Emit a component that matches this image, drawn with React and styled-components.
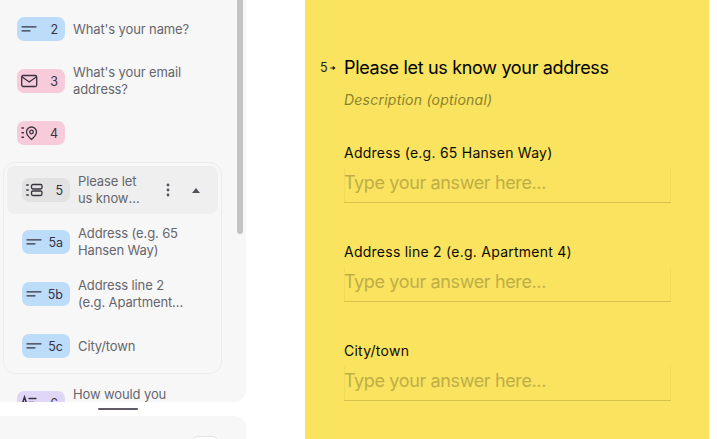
import React from "react";
import styled, { createGlobalStyle } from "styled-components";

const colors = {
  panel: "#f7f7f8",
  line: "#ececee",
  active: "#efefef",
  text: "#66666c",
  ink: "#37333f",
  yellow: "#f9e35f",
  blue: "#bcdcfa",
  pink: "#f8cbdb",
  purple: "#e0d7f8",
  grey: "#e2e2e2"
};

const GlobalStyle = createGlobalStyle`
  html, body {
    margin: 0;
    height: 100%;
    overflow: hidden;
    background: #fff;
    font-family: Inter, "Liberation Sans", sans-serif;
  }
`;

const Page = styled.div`
  width: 717px;
  height: 439px;
  display: grid;
  grid-template-columns: 246px 59px 404px 8px;
  overflow: hidden;
`;

const Side = styled.aside`
  display: flex;
  flex-direction: column;
  height: 439px;
  overflow: hidden;
`;

const ListPanel = styled.div`
  position: relative;
  box-sizing: border-box;
  height: 402px;
  flex: none;
  padding-top: 3px;
  background: ${colors.panel};
  border-radius: 0 0 12px 0;
  overflow: hidden;
`;

const Thumb = styled.div`
  position: absolute;
  top: -6px;
  right: 3px;
  width: 6px;
  height: 240px;
  border-radius: 3px;
  background: #c4c4c4;
`;

const Row = styled.div`
  height: 52px;
  display: flex;
  align-items: center;
  gap: 8px;
  padding-left: ${p => p.$indent || 17}px;
`;

const ActiveRow = styled(Row)`
  height: 48px;
  margin-bottom: 2px;
  padding-left: 15px;
  padding-right: 18px;
  background: ${colors.active};
  border-radius: 8px;
`;

const Chip = styled.div`
  flex: none;
  box-sizing: border-box;
  width: 48px;
  height: 24px;
  padding: 0 7px 0 4px;
  display: flex;
  align-items: center;
  justify-content: space-between;
  border-radius: 7px;
  background: ${p => p.$bg};
  color: ${colors.ink};
  font-size: 12.5px;
`;

const Title = styled.div`
  width: ${p => p.$width || 130}px;
  font-size: 13px;
  line-height: 17px;
  letter-spacing: -0.12px;
  color: ${colors.text};
  display: -webkit-box;
  -webkit-line-clamp: 2;
  -webkit-box-orient: vertical;
  overflow: hidden;
`;

const Group = styled.div`
  margin: 3px 0 3px 3px;
  width: 219px;
  box-sizing: border-box;
  padding: 3px 3px 1px;
  border: 1px solid ${colors.line};
  border-radius: 12px;
`;

const RowActions = styled.div`
  margin-left: auto;
  display: flex;
  align-items: center;
  gap: 22px;
`;

const Handle = styled.div`
  flex: none;
  align-self: flex-start;
  width: 40px;
  height: 2px;
  margin: 6px 0 6px 98px;
  background: #5f5a66;
  border-radius: 1px;
`;

const BottomPanel = styled.div`
  position: relative;
  flex: 1;
  background: ${colors.panel};
  border-radius: 0 12px 0 0;
`;

const PeekButton = styled.div`
  position: absolute;
  top: 20px;
  left: 190px;
  width: 30px;
  height: 30px;
  box-sizing: border-box;
  background: #fff;
  border: 1px solid #e4e4e6;
  border-radius: 8px;
`;

const Canvas = styled.main`
  grid-column: 3;
  background: ${colors.yellow};
  padding: 56px 38px 0 15px;
  color: #000;
`;

const Heading = styled.div`
  display: flex;
  align-items: center;
  height: 23px;
`;

const Step = styled.div`
  width: 24px;
  flex: none;
  display: flex;
  align-items: center;
  font-size: 12.5px;
  color: #222;
`;

const Question = styled.h1`
  margin: 0;
  font-size: 18px;
  font-weight: 400;
  line-height: 23px;
  letter-spacing: -0.32px;
  white-space: nowrap;
`;

const Description = styled.div`
  margin: 12px 0 0 24px;
  font-size: 14px;
  line-height: 17px;
  letter-spacing: 0.23px;
  font-style: italic;
  color: #8e8229;
`;

const Field = styled.div`
  margin: ${p => p.$first ? 36 : 40}px 0 0 24px;
`;

const Label = styled.div`
  font-size: 14px;
  line-height: 17px;
  letter-spacing: 0.25px;
  color: #0c0b05;
`;

const Answer = styled.div`
  box-sizing: border-box;
  height: 35px;
  margin-top: 7px;
  padding-top: 4px;
  font-size: 18px;
  line-height: 22px;
  letter-spacing: -0.37px;
  color: #bfae46;
  border-bottom: 1px solid #d6c34c;
  box-shadow: inset 1px 0 rgba(190, 170, 60, 0.12), inset -1px 0 rgba(190, 170, 60, 0.12);
`;

const Icon = ({ children }) => (
  <svg width="17" height="16" viewBox="0 0 17 16" fill="none" stroke="#37333f" strokeWidth="1.3" strokeLinecap="round">
    {children}
  </svg>
);

const ShortText = () => (
  <Icon>
    <path d="M1 5.8 H15 M1 9.8 H9" />
  </Icon>
);

const Mail = () => (
  <Icon>
    <rect x="0.7" y="2.5" width="15" height="11" rx="1.5" />
    <path d="M1.2 4 L8.2 9 L15.2 4" />
  </Icon>
);

const Pin = () => (
  <Icon>
    <path d="M1 3 H2.4 M1 7.7 H2.4 M1 12.3 H2.4" strokeWidth="1.5" />
    <path d="M10.5 14.5 C8 12.3 5.5 10 5.5 7 A5 5 0 0 1 15.5 7 C15.5 10 13 12.3 10.5 14.5 Z" />
    <circle cx="10.5" cy="7" r="1.8" />
  </Icon>
);

const Multi = () => (
  <Icon>
    <path d="M0.8 3 H2.2 M0.8 8 H2.2 M0.8 13 H2.2" strokeWidth="1.5" />
    <rect x="5.5" y="2.5" width="10.5" height="4.5" rx="1.4" />
    <rect x="5.5" y="9" width="10.5" height="4.5" rx="1.4" />
  </Icon>
);

const Legal = () => (
  <Icon>
    <path d="M0.8 10 L3.5 2 L6.2 10 M1.8 7.4 H5.2" strokeWidth="1.5" />
    <path d="M8 3.5 H15 M8 7.5 H13" />
  </Icon>
);

const Dots = () => (
  <svg width="4" height="14" viewBox="0 0 4 14" fill="#55525c">
    <circle cx="2" cy="2" r="1.4" />
    <circle cx="2" cy="7" r="1.4" />
    <circle cx="2" cy="12" r="1.4" />
  </svg>
);

const Caret = () => (
  <svg width="8" height="5" viewBox="0 0 8 5" fill="#55525c">
    <path d="M4 0 L8 5 H0 Z" />
  </svg>
);

const ArrowMark = styled.svg`
  margin-left: 2px;
`;

const Arrow = () => (
  <ArrowMark width="6" height="6" viewBox="0 0 6 6" fill="#222" stroke="#222" strokeWidth="0.8">
    <path d="M0 3 H3" />
    <path d="M3 1.4 L5.2 3 L3 4.6 Z" />
  </ArrowMark>
);

const subs = [
  { id: "5a", title: "Address (e.g. 65 Hansen Way)" },
  { id: "5b", title: "Address line 2 (e.g. Apartment 4)" },
  { id: "5c", title: "City/town" }
];

const fields = ["Address (e.g. 65 Hansen Way)", "Address line 2 (e.g. Apartment 4)", "City/town"];

export default function App() {
  return (
    <Page>
      <GlobalStyle />
      <Side>
        <ListPanel>
          <Row>
            <Chip $bg={colors.blue}><ShortText />2</Chip>
            <Title>What's your name?</Title>
          </Row>
          <Row>
            <Chip $bg={colors.pink}><Mail />3</Chip>
            <Title>What's your email address?</Title>
          </Row>
          <Row>
            <Chip $bg={colors.pink}><Pin />4</Chip>
          </Row>
          <Group>
            <ActiveRow>
              <Chip $bg={colors.grey}><Multi />5</Chip>
              <Title $width={68}>Please let us know your address</Title>
              <RowActions><Dots /><Caret /></RowActions>
            </ActiveRow>
            {subs.map(s => (
              <Row key={s.id} $indent={15}>
                <Chip $bg={colors.blue}><ShortText />{s.id}</Chip>
                <Title $width={106}>{s.title}</Title>
              </Row>
            ))}
          </Group>
          <Row>
            <Chip $bg={colors.purple}><Legal />6</Chip>
            <Title>How would you describe it?</Title>
          </Row>
          <Thumb />
        </ListPanel>
        <Handle />
        <BottomPanel>
          <PeekButton />
        </BottomPanel>
      </Side>
      <Canvas>
        <Heading>
          <Step>5<Arrow /></Step>
          <Question>Please let us know your address</Question>
        </Heading>
        <Description>Description (optional)</Description>
        {fields.map((f, i) => (
          <Field key={f} $first={i === 0}>
            <Label>{f}</Label>
            <Answer>Type your answer here...</Answer>
          </Field>
        ))}
      </Canvas>
    </Page>
  );
}
